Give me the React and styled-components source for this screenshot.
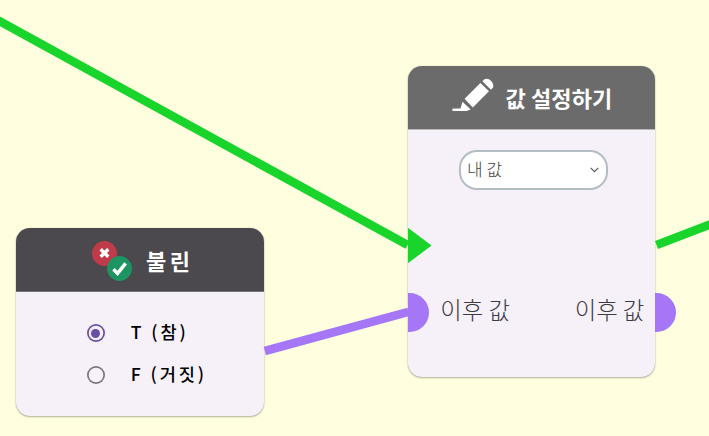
import React from "react";
import styled, { createGlobalStyle } from "styled-components";

const GlobalStyle = createGlobalStyle`
  * { box-sizing: border-box; }
  body { margin: 0; background: #ffffe0; overflow: hidden; }
`;

const Canvas = styled.main`
  position: relative;
  width: 709px;
  height: 436px;
  overflow: hidden;
  background: #ffffe0;
  font-family: "Noto Sans CJK KR", sans-serif;
`;

const Edges = styled.svg`
  position: absolute;
  inset: 0;
  width: 709px;
  height: 436px;
  fill: none;
  stroke-width: 8.6;
`;

const Node = styled.section`
  position: absolute;
  left: ${(p) => p.$x}px;
  top: ${(p) => p.$y}px;
  width: 247.8px;
  height: ${(p) => p.$height}px;
  display: flex;
  flex-direction: column;
  border-radius: 14px;
  background: #f6f1f9;
  box-shadow: 0 1px 2px rgba(0, 0, 0, 0.3), 0 0 1px rgba(0, 0, 0, 0.25);
`;

const Header = styled.header`
  flex: none;
  display: flex;
  align-items: center;
  height: 64px;
  padding-left: ${(p) => p.$indent}px;
  gap: ${(p) => p.$gap}px;
  border-radius: 14px 14px 0 0;
  border-bottom: 1px solid ${(p) => p.$line};
  background: ${(p) => p.$color};
`;

const Title = styled.h2`
  margin: 0;
  color: #fff;
  font-size: 22px;
  line-height: 30px;
  font-weight: 700;
  letter-spacing: ${(p) => p.$spacing}px;
  white-space: nowrap;
`;

const Options = styled.div`
  display: flex;
  flex-direction: column;
  gap: 18px;
  padding: 29px 0 0 70.4px;
`;

const Option = styled.label`
  display: flex;
  align-items: center;
  gap: 26px;
  height: 24px;
  color: #000;
  font-size: 17.6px;
  line-height: 22px;
  font-weight: 500;
  letter-spacing: 2.9px;
  white-space: pre;
`;

const OptionText = styled.span`
  padding-bottom: 2px;
`;

const Radio = styled.span`
  display: grid;
  place-items: center;
  width: 18px;
  height: 18px;
  box-shadow: inset 0 0 0 1.7px ${(p) => (p.$on ? "#6750a4" : "#79767e")};
  border-radius: 50%;

  &::after {
    content: "";
    width: 9px;
    height: 9px;
    border-radius: 50%;
    background: ${(p) => (p.$on ? "#6750a4" : "transparent")};
  }
`;

const Select = styled.div`
  display: flex;
  align-items: center;
  justify-content: space-between;
  width: 149.5px;
  height: 40px;
  margin: 20px 0 0 51px;
  padding: 0 7px 0 6.5px;
  border: 2px solid #b4bcc4;
  border-radius: 18px;
  background: #fff;
  color: #444;
  font-size: 17px;
  line-height: 22px;
  font-weight: 300;
`;

const SelectText = styled.span`
  padding-bottom: 2px;
`;

const Ports = styled.div`
  display: flex;
  justify-content: space-between;
  margin-top: 101px;
  padding: 0 11px 0 32.6px;
  color: #3c3941;
  font-size: 23.4px;
  line-height: 36px;
  font-weight: 300;
`;

const Socket = styled.span`
  position: absolute;
  left: ${(p) => p.$x}px;
  top: 227px;
  width: 21px;
  height: 39px;
  border-radius: 0 20px 20px 0;
  background: #a576f6;
`;

const FlowIn = styled.span`
  position: absolute;
  left: 0;
  top: 162px;
  width: 24px;
  height: 36px;
  background: #19d52b;
  clip-path: polygon(0 0, 100% 50%, 0 100%);
`;

const Glyph = styled.svg`
  flex: none;
  margin-top: ${(p) => p.$shift}px;
`;

const BooleanIcon = () => (
  <Glyph $shift={3} width="40" height="40" viewBox="0 0 40 40">
    <circle cx="12.5" cy="12.5" r="12.5" fill="#bf3b49" />
    <path d="M8.7 8.2l7.6 7.6M16.3 8.2l-7.6 7.6" stroke="#fff" strokeWidth="3.4" />
    <circle cx="27.5" cy="27.5" r="12.4" fill="#1c9563" />
    <path d="M21.4 28.2l4.2 4.2L33.6 22.4" fill="none" stroke="#fff" strokeWidth="3.4" />
  </Glyph>
);

const PencilIcon = () => (
  <Glyph $shift={-4} width="42" height="34" viewBox="0 0 42 34" fill="#fff">
    <path d="M1.5 30.4H8.5l2-6.6 8.2 7.6L14.6 33H1.5a1.3 1.3 0 010-2.6z" />
    <path d="M12.6 20.8L28.4 4.9l8.6 8.4-16.2 16.1z" />
    <path d="M30.4 3.2L32.4 1.3c4-2.4 10.4 3.4 8.6 8.2l-2 2.3z" />
  </Glyph>
);

const Chevron = () => (
  <svg width="9" height="6" viewBox="0 0 9 6" fill="none">
    <path d="M.7.8l3.8 3.8L8.3.8" stroke="#555" strokeWidth="1.1" />
  </svg>
);

export default function App() {
  return (
    <Canvas>
      <GlobalStyle />
      <Node $x={16.4} $y={228.4} $height={188}>
        <Header $color="#4b484e" $line="#747278" $indent={75.6} $gap={14}>
          <BooleanIcon />
          <Title $spacing={3.6}>불린</Title>
        </Header>
        <Options>
          <Option><Radio $on /><OptionText>T (참)</OptionText></Option>
          <Option><Radio /><OptionText>F (거짓)</OptionText></Option>
        </Options>
      </Node>
      <Node $x={407.6} $y={65.5} $height={311}>
        <Header $color="#6b6b6b" $line="#b9b7bb" $indent={44.6} $gap={11.2}>
          <PencilIcon />
          <Title $spacing={0.15}>값 설정하기</Title>
        </Header>
        <Select><SelectText>내 값</SelectText><Chevron /></Select>
        <Ports><span>이후 값</span><span>이후 값</span></Ports>
        <FlowIn />
        <Socket $x={0} />
        <Socket $x={247.5} />
      </Node>
      <Edges viewBox="0 0 709 436">
        <path d="M-10 15.9L407.6 245M656.5 245L720 220.7" stroke="#19d52b" />
        <path d="M264.8 351L408.5 311.8" stroke="#a576f6" />
      </Edges>
    </Canvas>
  );
}
